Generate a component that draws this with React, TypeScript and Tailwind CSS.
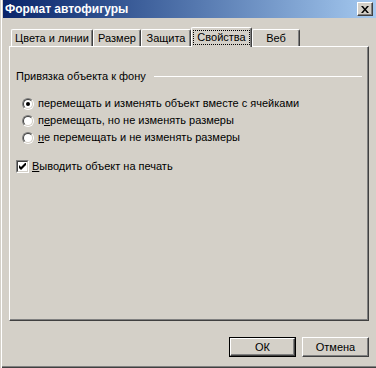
const tabs = [
  { label: "Цвета и линии", w: "w-[82px]" },
  { label: "Размер", w: "w-[48px]" },
  { label: "Защита", w: "w-[50px]" },
  { label: "Свойства", w: "w-[61px]", active: true },
  { label: "Веб", w: "w-[48px]" },
];

function Radio({ checked }: { checked?: boolean }) {
  return (
    <span className="w-[12px] h-[12px] rounded-full border border-t-[#808080] border-l-[#808080] border-b-white border-r-white flex shrink-0">
      <span className="flex-1 rounded-full border border-t-[#404040] border-l-[#404040] border-b-[#d4d0c8] border-r-[#d4d0c8] bg-white flex items-center justify-center">
        {checked && <span className="w-[4px] h-[4px] rounded-full bg-black" />}
      </span>
    </span>
  );
}

function Checkbox() {
  return (
    <span className="w-[13px] h-[13px] border border-t-[#808080] border-l-[#808080] border-b-white border-r-white flex shrink-0">
      <span className="flex-1 border border-t-[#404040] border-l-[#404040] border-b-[#d4d0c8] border-r-[#d4d0c8] bg-white flex items-center justify-center">
        <svg width="7" height="7" viewBox="0 0 7 7">
          <path d="M0 2v3l2 2 5-5V-1L2 4z" fill="#000" />
        </svg>
      </span>
    </span>
  );
}

function Tab({ label, w, active }: { label: string; w: string; active?: boolean }) {
  if (active) {
    return (
      <div
        className={`${w} h-[20px] -mb-px relative z-10 bg-[#d4d0c8] border-t border-l border-white border-r border-r-[#404040] rounded-t-[2px] shadow-[inset_-1px_0_0_#808080] flex items-start justify-center pt-[2px]`}
      >
        <span className="border border-dotted border-black px-[3px] leading-[13px]">{label}</span>
      </div>
    );
  }
  return (
    <div
      className={`${w} h-[17px] bg-[#d4d0c8] border-t border-l border-white border-r border-r-[#404040] rounded-t-[2px] shadow-[inset_-1px_0_0_#808080] flex items-center justify-center leading-[13px] pt-[1px]`}
    >
      {label}
    </div>
  );
}

function Button({ children, primary }: { children: React.ReactNode; primary?: boolean }) {
  return (
    <button
      className={`w-[67px] h-[20px] flex ${primary ? "border border-black" : ""}`}
    >
      <span className="flex-1 border border-t-white border-l-white border-b-[#404040] border-r-[#404040] shadow-[inset_-1px_-1px_0_#808080] bg-[#d4d0c8] flex items-center justify-center leading-[13px]">
        {children}
      </span>
    </button>
  );
}

export default function App() {
  return (
    <div className="w-[376px] h-[368px] bg-[#d4d0c8] flex flex-col text-[11px] text-black font-['Liberation_Sans',Arial,sans-serif] shadow-[inset_1px_0_0_#d4d0c8,inset_2px_0_0_#fff,inset_0_-1px_0_#404040,inset_0_-2px_0_#808080] overflow-hidden">
      {/* Title bar */}
      <div className="ml-[3px] h-[18px] flex items-center justify-between pl-[2px] pr-[3px] bg-gradient-to-r from-[#0a246a] to-[#a6caf0]">
        <span className="text-white font-bold text-[12px] leading-none">Формат автофигуры</span>
        <span className="w-[16px] h-[14px] flex border border-t-white border-l-white border-b-[#404040] border-r-[#404040]">
          <span className="flex-1 bg-[#d4d0c8] shadow-[inset_-1px_-1px_0_#808080] flex items-center justify-center">
            <svg width="8" height="7" viewBox="0 0 8 7">
              <path d="M0 0h2l2 2.5L6 0h2L5 3.5 8 7H6L4 4.5 2 7H0l3-3.5z" fill="#000" />
            </svg>
          </span>
        </span>
      </div>

      <div className="flex-1 flex flex-col pl-[9px] pr-[7px] pt-[9px]">
        {/* Tabs */}
        <div className="h-[19px] flex items-end pl-[2px]">
          {tabs.map((t) => (
            <Tab key={t.label} label={t.label} w={t.w} active={t.active} />
          ))}
        </div>

        {/* Panel */}
        <div className="h-[275px] border-t border-l border-white border-r border-b border-r-[#404040] border-b-[#404040] shadow-[inset_-1px_-1px_0_#808080] flex flex-col pl-[6px] pr-[6px] pt-[23px]">
          <div className="flex items-center gap-[8px] h-[13px]">
            <span className="leading-[13px]">Привязка объекта к фону</span>
            <span className="flex-1 h-px bg-white" />
          </div>

          <div className="flex flex-col mt-[12px] pl-[6px]">
            <label className="h-[17px] flex items-center gap-[4px]">
              <Radio checked />
              <span>перемещать и изменять объект вместе с ячейками</span>
            </label>
            <label className="h-[17px] flex items-center gap-[4px]">
              <Radio />
              <span>
                п<u>е</u>ремещать, но не изменять размеры
              </span>
            </label>
            <label className="h-[17px] flex items-center gap-[4px]">
              <Radio />
              <span>
                <u>н</u>е перемещать и не изменять размеры
              </span>
            </label>
          </div>

          <label className="h-[17px] mt-[12px] flex items-center gap-[3px]">
            <Checkbox />
            <span>
              <u>В</u>ыводить объект на печать
            </span>
          </label>
        </div>

        {/* Buttons */}
        <div className="mt-[16px] flex justify-end gap-[6px]">
          <Button primary>ОК</Button>
          <Button>Отмена</Button>
        </div>
      </div>
    </div>
  );
}
